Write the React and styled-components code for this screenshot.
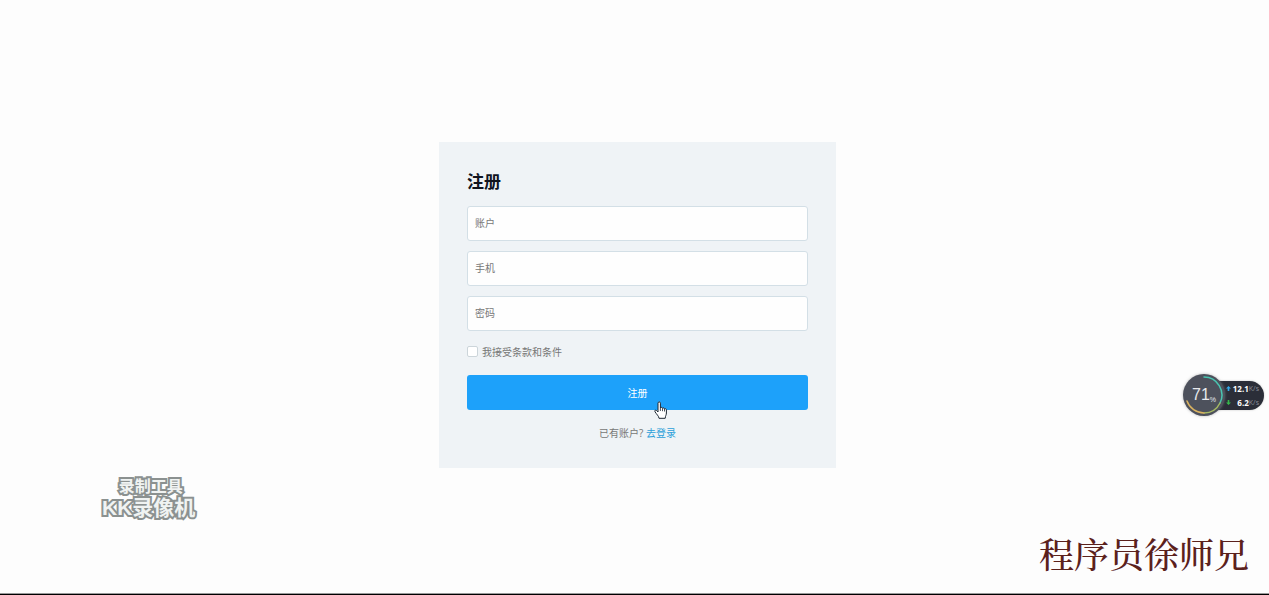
import React, { useState } from 'react'
import styled, { createGlobalStyle } from 'styled-components'

const GlobalStyle = createGlobalStyle`
  * {
    box-sizing: border-box;
  }
  body {
    margin: 0;
    background: #fdfdfd;
    font-family: 'Open Sans', 'Noto Sans CJK SC', sans-serif;
  }
`

const Page = styled.main`
  position: relative;
  display: flex;
  align-items: center;
  justify-content: center;
  min-height: 100vh;
  padding: 15px 0 0 6px;
  border-bottom: 1px solid #000;
  box-shadow: inset 0 -1px #999;
  overflow: hidden;
`

const Card = styled.form`
  display: flex;
  flex-direction: column;
  width: 100%;
  max-width: 397px;
  padding: 28px 28px 27px;
  background: #eff3f6;
`

const Title = styled.h1`
  margin: 0 0 12px;
  font-size: 17px;
  line-height: 24px;
  font-weight: 700;
  color: #10141f;
`

const Fields = styled.div`
  display: flex;
  flex-direction: column;
  gap: 10px;
`

const Field = styled.input`
  width: 100%;
  height: 35px;
  padding: 0 7px;
  border: 1px solid #d3dfe6;
  border-radius: 3px;
  background: #fefefe;
  color: #333;
  font-family: inherit;
  font-size: 10px;
  outline: none;

  &::placeholder {
    color: #777;
    opacity: 1;
  }
`

const Terms = styled.label`
  display: flex;
  align-items: center;
  gap: 4px;
  margin: 13px 0 15px;
  font-size: 10px;
  line-height: 16px;
  color: #777;
`

const Checkbox = styled.input`
  appearance: none;
  width: 11px;
  height: 11px;
  margin: 0;
  border: 1px solid #ccd5da;
  border-radius: 2px;
  background: #fff;

  &:checked {
    background: #1da1fa;
  }
`

const Submit = styled.button`
  height: 35px;
  border: 0;
  border-radius: 3px;
  background: #1da1fa;
  color: #fff;
  font-family: inherit;
  font-size: 10px;
  cursor: pointer;
`

const Footer = styled.p`
  margin: 15px 0 0;
  text-align: center;
  font-size: 10px;
  line-height: 16px;
  color: #777;
`

const Link = styled.a`
  color: #2c9fd9;
  text-decoration: none;
`

const Pointer = styled.svg`
  position: absolute;
  left: 654px;
  top: 401px;
  width: 13px;
  height: 18px;
  pointer-events: none;
`

const Monitor = styled.aside`
  position: absolute;
  right: 5px;
  top: 374px;
  display: flex;
  align-items: center;
  font-family: 'Open Sans', sans-serif;
`

const Gauge = styled.div`
  position: relative;
  z-index: 1;
  display: flex;
  align-items: center;
  justify-content: center;
  width: 42px;
  height: 42px;
  border-radius: 50%;
  background: #4d515c;
  box-shadow: 0 0 3px #8889;
  color: #e8eaee;
  font-family: 'Liberation Sans', sans-serif;
  font-size: 16px;

  small {
    align-self: flex-end;
    padding-bottom: 13px;
    font-size: 7px;
  }

  svg {
    position: absolute;
    inset: 0;
  }
`

const Rates = styled.div`
  display: flex;
  flex-direction: column;
  justify-content: space-between;
  width: 60px;
  height: 29px;
  margin-left: -21px;
  padding: 2px 5px 1px 22px;
  border-radius: 0 15px 15px 0;
  background: #2b2e38;
  box-shadow: 0 0 2px #8888;
`

const Rate = styled.div`
  display: flex;
  align-items: center;
  color: #fff;
  font-size: 8px;
  line-height: 12px;
  font-weight: 700;

  svg {
    margin-right: auto;
  }
  small {
    color: #8a8e98;
    font-size: 7px;
    font-weight: 400;
  }
`

const Recorder = styled.div`
  position: absolute;
  left: 102px;
  bottom: 75px;
  display: flex;
  flex-direction: column;
  align-items: center;
  color: #f0f3f2;
  font-family: 'Liberation Sans', 'Noto Sans CJK SC', sans-serif;
  font-weight: 700;
  -webkit-text-stroke: 4px #8b9190;
  paint-order: stroke fill;
`

const RecorderLine = styled.span`
  padding-left: ${props => (props.$large ? 0 : 4)}px;
  font-size: ${props => (props.$large ? 21 : 16)}px;
  line-height: ${props => (props.$large ? 22 : 21)}px;
  white-space: nowrap;
`

const Author = styled.div`
  position: absolute;
  right: 20px;
  bottom: 19px;
  color: #5b211c;
  font-family: 'Noto Serif CJK SC', 'Noto Serif SC', 'Noto Sans CJK SC', serif;
  font-size: 35px;
  line-height: 44px;
  font-weight: 500;
  white-space: nowrap;
`

const fields = [
  { name: 'account', label: '账户', type: 'text' },
  { name: 'phone', label: '手机', type: 'tel' },
  { name: 'password', label: '密码', type: 'password' },
]

function SpeedMonitor() {
  return (
    <Monitor>
      <Gauge>
        <svg viewBox="0 0 42 42" fill="none" strokeWidth="1.5" strokeLinecap="round">
          <path d="M21 3A18 18 0 0 1 37 29" stroke="#49c5b1" />
          <path d="M37 29A18 18 0 0 1 21 39" stroke="#a5b963" />
          <path d="M21 39A18 18 0 0 1 4 27" stroke="#d9b260" />
        </svg>
        71<small>%</small>
      </Gauge>
      <Rates>
        <Rate>
          <svg width="5" height="5" viewBox="0 0 6 6"><path d="M3 0L6 3H4V6H2V3H0Z" fill="#35a9e8" /></svg>
          12.1<small>K/s</small>
        </Rate>
        <Rate>
          <svg width="5" height="5" viewBox="0 0 6 6"><path d="M3 6L6 3H4V0H2V3H0Z" fill="#36b64a" /></svg>
          6.2<small>K/s</small>
        </Rate>
      </Rates>
    </Monitor>
  )
}

function App() {
  const [values, setValues] = useState({ account: '', phone: '', password: '' })
  const [accepted, setAccepted] = useState(false)

  function handleChange(e) {
    setValues({ ...values, [e.target.name]: e.target.value })
  }

  return (
    <Page>
      <GlobalStyle />
      <Card onSubmit={e => e.preventDefault()}>
        <Title>注册</Title>
        <Fields>
          {fields.map(field => (
            <Field
              key={field.name}
              name={field.name}
              type={field.type}
              placeholder={field.label}
              aria-label={field.label}
              value={values[field.name]}
              onChange={handleChange}
            />
          ))}
        </Fields>
        <Terms>
          <Checkbox type="checkbox" checked={accepted} onChange={e => setAccepted(e.target.checked)} />
          我接受条款和条件
        </Terms>
        <Submit type="submit">注册</Submit>
        <Footer>
          已有账户? <Link href="#login">去登录</Link>
        </Footer>
      </Card>
      <Pointer viewBox="0 0 13 18">
        <path
          d="M4 11V2.2C4 .4 6.4.4 6.4 2.2V7C6.8 6 8.4 6.2 8.5 7.3C9 6.6 10.3 6.8 10.5 7.9C11.1 7.3 12.4 7.7 12.4 8.9V12C12.4 14 11.4 14.6 11.2 17.3H5C4.8 15 2.6 13.4 1 10.8C.2 9.4 1.7 8.5 2.7 9.6Z"
          fill="#fff"
          stroke="#1c2733"
          strokeLinejoin="round"
        />
        <path d="M6.4 7V10M8.5 7.4V10.2M10.5 8V10.5" stroke="#1c2733" strokeWidth="0.8" />
      </Pointer>
      <SpeedMonitor />
      <Recorder>
        <RecorderLine>录制工具</RecorderLine>
        <RecorderLine $large>KK录像机</RecorderLine>
      </Recorder>
      <Author>程序员徐师兄</Author>
    </Page>
  )
}

export default App
